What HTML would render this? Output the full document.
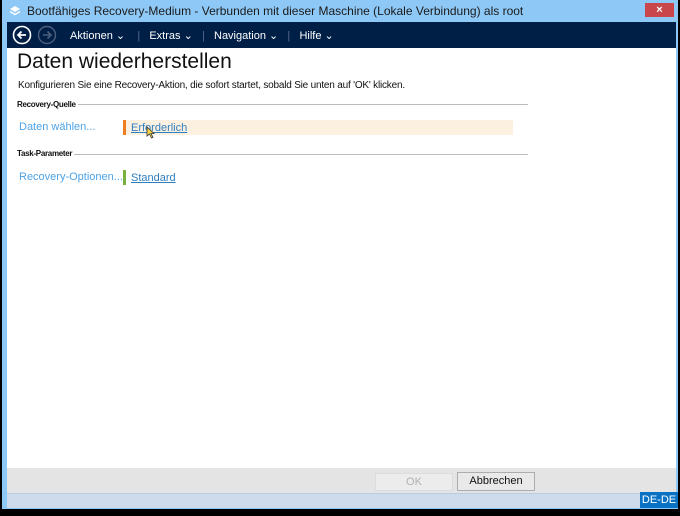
<!DOCTYPE html>
<html><head><style>
body{margin:0;width:680px;height:516px;background:#000;position:relative;overflow:hidden;font-family:"Liberation Sans",sans-serif}
.a{position:absolute}
</style></head><body>
<div class="a" style="left:2px;top:0;width:676px;height:509px;background:#8ec8f6"></div>
<div class="a" style="left:7px;top:22px;width:669px;height:26px;background:#001f47"></div>
<div class="a" style="left:7px;top:48px;width:669px;height:420px;background:#fff"></div>
<div class="a" style="left:7px;top:468px;width:669px;height:25px;background:#e4e4e4"></div>
<div class="a" style="left:7px;top:493px;width:669px;height:14px;background:#cddbed;border-top:1px solid #b8cde4"></div>
<div class="a" style="left:640px;top:492px;width:38px;height:16px;background:#0a72c4;color:#fff;font-size:11px;line-height:16px;text-align:center">DE-DE</div>
<svg class="a" style="left:9px;top:5px" width="12" height="12" viewBox="0 0 12 12"><path d="M6 1L11 4 6 7 1 4Z" fill="#fff"/><path d="M1 6.5L6 9.5 11 6.5" stroke="#fff" fill="none" stroke-width="1.5"/></svg>
<div class="a" style="left:27px;top:4px;font-size:12px;color:#1a1a1a">Bootfähiges Recovery-Medium - Verbunden mit dieser Maschine (Lokale Verbindung) als root</div>
<div class="a" style="left:645px;top:3px;width:29px;height:14px;background:#c9474a;color:#fff;font-size:11px;line-height:14px;text-align:center;font-weight:bold">×</div>
<svg class="a" style="left:12px;top:25px" width="46" height="20" viewBox="0 0 46 20"><circle cx="10" cy="10" r="8.5" stroke="#fff" stroke-width="1.6" fill="none"/><path d="M14 10H6M9.5 6.5L6 10 9.5 13.5" stroke="#fff" stroke-width="1.8" fill="none"/><circle cx="35" cy="10" r="8.5" stroke="#4c5e7c" stroke-width="1.4" fill="none"/><path d="M31 10H39M35.5 6.5L39 10 35.5 13.5" stroke="#4c5e7c" stroke-width="1.6" fill="none"/></svg>
<div class="a" style="left:70px;top:29px;font-size:11px;color:#fff;white-space:pre">Aktionen ⌄    <span style="color:#56688a">|</span>   Extras ⌄   <span style="color:#56688a">|</span>   Navigation ⌄   <span style="color:#56688a">|</span>   Hilfe ⌄</div>
<div class="a" style="left:17px;top:50px;font-size:21px;color:#111">Daten wiederherstellen</div>
<div class="a" style="left:18px;top:80px;font-size:10px;color:#111;letter-spacing:-0.2px">Konfigurieren Sie eine Recovery-Aktion, die sofort startet, sobald Sie unten auf 'OK' klicken.</div>
<div class="a" style="left:17px;top:100px;font-size:8px;font-weight:bold;color:#111;letter-spacing:-0.3px">Recovery-Quelle</div>
<div class="a" style="left:78px;top:104px;width:450px;height:1px;background:#bbb"></div>
<div class="a" style="left:123px;top:120px;width:390px;height:15px;background:#fcf0e1"></div>
<div class="a" style="left:123px;top:120px;width:3px;height:15px;background:#f07d1e"></div>
<div class="a" style="left:19px;top:121px;font-size:11px;color:#4da3e8">Daten wählen...</div>
<div class="a" style="left:131px;top:122px;font-size:11px;color:#2f7fc0;text-decoration:underline">Erforderlich</div>
<div class="a" style="left:17px;top:149px;font-size:8px;font-weight:bold;color:#111;letter-spacing:-0.3px">Task-Parameter</div>
<div class="a" style="left:74px;top:154px;width:454px;height:1px;background:#bbb"></div>
<div class="a" style="left:123px;top:170px;width:3px;height:15px;background:#7ab03c"></div>
<div class="a" style="left:19px;top:171px;font-size:11px;color:#4da3e8">Recovery-Optionen...</div>
<div class="a" style="left:131px;top:172px;font-size:11px;color:#2f7fc0;text-decoration:underline">Standard</div>
<svg class="a" style="left:146px;top:126px" width="10" height="13" viewBox="0 0 10 13"><path d="M1 1V10L3.5 8 5.5 12 7 11.3 5 7.5H8Z" fill="#f5d34a" stroke="#333" stroke-width="0.8"/></svg>
<div class="a" style="left:375px;top:473px;width:76px;height:16px;background:#ececec;border:1px solid #dcdcdc;color:#b0b0b0;font-size:11px;line-height:16px;text-align:center">OK</div>
<div class="a" style="left:457px;top:472px;width:76px;height:17px;background:#e9e9e9;border:1px solid #adadad;color:#111;font-size:11px;line-height:17px;text-align:center">Abbrechen</div>
</body></html>
